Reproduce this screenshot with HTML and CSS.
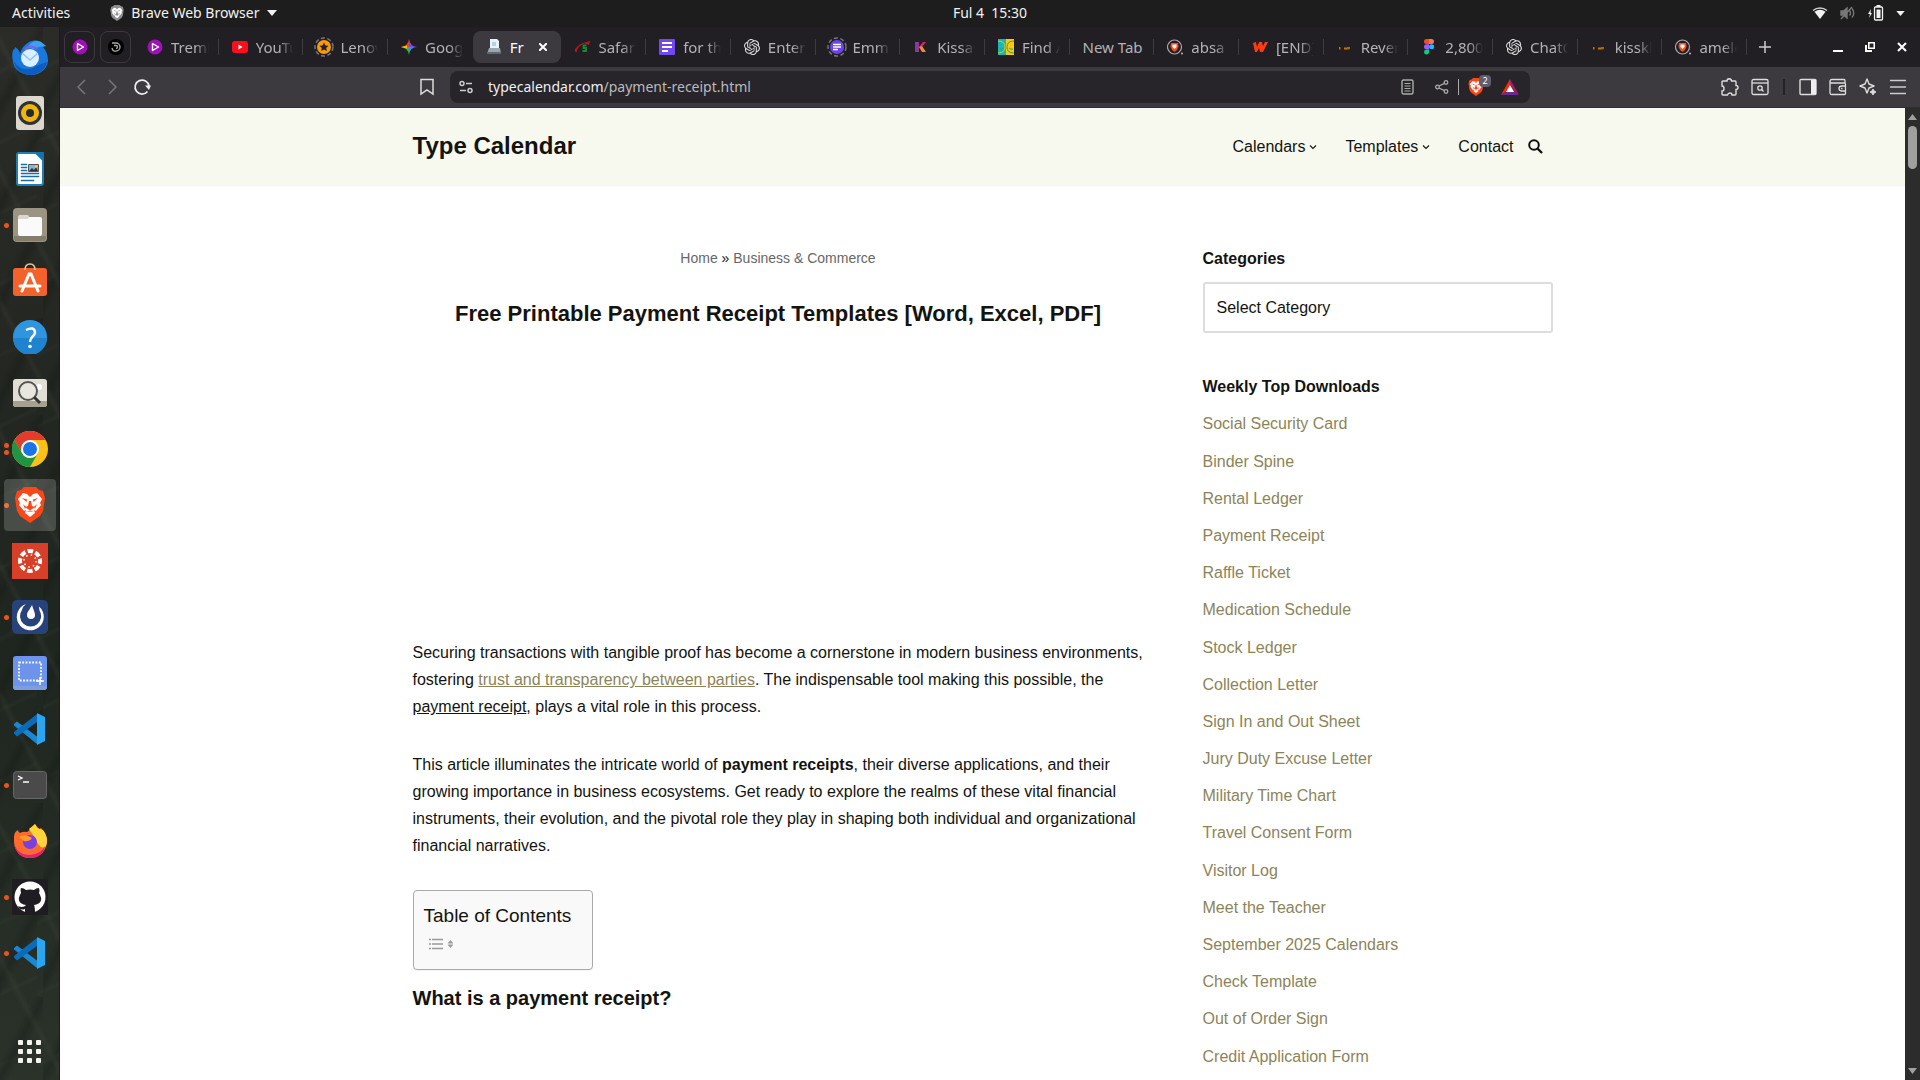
FILE: index.html
```html
<!DOCTYPE html>
<html lang="en">
<head>
<meta charset="utf-8">
<title>Free Printable Payment Receipt Templates [Word, Excel, PDF]</title>
<link rel="stylesheet" href="styles.css">
</head>
<body>
<svg class="sprite" aria-hidden="true">
  <symbol id="lion" viewBox="0 0 30 36">
    <path d="M9 0h12l3 3 4 1 2 7-2 13-3 5-10 7-10-7-3-5L0 11l2-7 4-1z"/>
    <path class="lion-face" d="M8 6l4 1h6l4-1 5 6-2 4 1 2-5 6-2-1 1 3-5 4-5-4 1-3-2 1-5-6 1-2-2-4z"/>
    <path d="M7 11l5 1.500-.5 2.500zM23 11l-5 1.500.5 2.500zM14 14h2l1 5 3 1-5 3.500L10 20l3-1zM8 17l3 3-1 2zM22 17l-3 3 1 2zM12 7l3 3 3-3zM11 25l4-1.500 4 1.500-4-.4z"/>
  </symbol>
  <symbol id="knot" viewBox="0 0 24 24">
    <path d="M22.28 9.82a5.98 5.98 0 0 0-.52-4.91 6.05 6.05 0 0 0-6.51-2.9A6.07 6.07 0 0 0 4.98 4.18a5.98 5.98 0 0 0-4 2.9 6.05 6.05 0 0 0 .75 7.1 5.98 5.98 0 0 0 .5 4.91 6.05 6.05 0 0 0 6.52 2.9A5.98 5.98 0 0 0 13.26 24a6.06 6.06 0 0 0 5.77-4.21 5.99 5.99 0 0 0 4-2.9 6.06 6.06 0 0 0-.75-7.07zm-9.02 12.61a4.48 4.48 0 0 1-2.88-1.04l.14-.08 4.78-2.76a.8.8 0 0 0 .39-.68v-6.74l2.02 1.17v5.58a4.5 4.5 0 0 1-4.45 4.55zM3.6 18.3a4.47 4.47 0 0 1-.53-3.01l.14.08 4.78 2.76a.77.77 0 0 0 .78 0l5.84-3.37v2.33l-4.87 2.82A4.5 4.5 0 0 1 3.6 18.3zM2.34 7.9a4.49 4.49 0 0 1 2.37-1.98V11.6a.77.77 0 0 0 .38.68l5.82 3.35-2.02 1.17-4.83-2.79A4.5 4.5 0 0 1 2.34 7.9zm16.6 3.85l-5.84-3.38 2.02-1.16 4.83 2.79a4.49 4.49 0 0 1-.68 8.1V12.4a.79.79 0 0 0-.33-.65zm2-3.02l-.14-.09-4.77-2.78a.78.78 0 0 0-.79 0L9.41 9.23V6.9l4.87-2.8a4.5 4.5 0 0 1 6.66 4.63zM8.3 12.86L6.28 11.7V6.07a4.5 4.5 0 0 1 7.38-3.45l-.14.08-4.78 2.76a.8.8 0 0 0-.39.68zm1.1-2.36l2.6-1.5 2.6 1.5v3L12 15l-2.6-1.5z"/>
  </symbol>
  <symbol id="play" viewBox="0 0 16 16">
    <circle cx="8" cy="8" r="7.5" fill="#9c12b4"/><path d="M5.500 4.500v7l6-3.500z" fill="none" stroke="#fff" stroke-width="1.400" stroke-linejoin="round"/>
  </symbol>
  <symbol id="code" viewBox="0 0 32 32">
    <path d="M0 11l3-2.500 20 15V31L0 12.500z" fill="#1b86d1"/>
    <path d="M0 20.500l3 3L23 9V1L0 19z" fill="#0a6cb8"/>
    <path d="M23 0l8 4v24l-8 4z" fill="#2aa5f2"/>
  </symbol>
  <symbol id="logs" viewBox="0 0 16 16">
    <path d="M2 8h1.500v2.500H2zM7 8.500h3v2H7z" fill="#c0740c"/><path d="M10 8h3v1.500l-1 1h-2z" fill="#a8660c"/>
  </symbol>
  <symbol id="search-lion" viewBox="0 0 16 16">
    <circle cx="7.500" cy="8" r="7" fill="none" stroke="#aaa" stroke-width="1.200"/><circle cx="15" cy="14.500" r="1" fill="#bbb"/><path d="M4 4h7l.5 3.500L10 11l-2.500 2L5 11 3.500 7.500z" fill="#fb4a1c"/><path d="M5.500 5.500h4v2.500l-2 2-2-2z" fill="#fff"/>
  </symbol>
  <symbol id="chevron" viewBox="0 0 8 8"><path d="M1 2.500l3 3 3-3" fill="none" stroke="currentColor" stroke-width="1.100"/></symbol>
  <symbol id="caret" viewBox="0 0 10 6"><path d="M0 0h10L5 6z" fill="#f2f2f2"/></symbol>
</svg>

<header class="topbar">
  <div class="topbar-left">
    <button class="topbar-btn">Activities</button>
    <button class="topbar-btn app-menu"><svg class="app-lion" width="14" height="16"><use href="#lion"/></svg>Brave Web Browser<svg width="10" height="6"><use href="#caret"/></svg></button>
  </div>
  <button class="topbar-btn clock">Ful 4&nbsp; 15:30</button>
  <div class="topbar-right">
    <svg width="16" height="14" viewBox="0 0 16 14"><path d="M1 4.500a11 11 0 0 1 14 0" fill="none" stroke="#ccc" stroke-width="1.500"/><path d="M2.500 5.800a9 9 0 0 1 11 0L8 13z" fill="#f2f2f2"/></svg>
    <svg width="16" height="14" viewBox="0 0 16 14" fill="none" stroke="#777" stroke-width="1.400"><path d="M1 5h2.500L7 2v10L3.500 9H1z" fill="#777"/><path d="M9.500 4.500q2 2.500 0 5M12 2.500q3.500 4.500 0 9M1 13L12 1"/></svg>
    <svg width="16" height="16" viewBox="0 0 16 16"><path d="M3 4L0 9h2l-1 4 3-5H2.500z" fill="#f2f2f2"/><rect x="6.500" y="2" width="8" height="13" rx="1" fill="none" stroke="#f2f2f2" stroke-width="1.300"/><path d="M8.500 0h4v2h-4zM8.500 4.500h4V13h-4z" fill="#f2f2f2"/></svg>
    <svg width="9" height="5"><use href="#caret"/></svg>
  </div>
</header>

<div class="desktop">
  <nav class="dock" aria-label="Dock">
    <button class="dock-item" aria-label="Thunderbird"><svg width="36" height="36" viewBox="0 0 36 36"><path d="M1 11c1 0 2-1 2-3 3 2 5 4 5 7 1-5 4-9 9-12 4-2 9-2 12 0l5 4-3 1c4 5 5 9 5 14-1 8-8 14-17 14S2 31 1 23c-1-5-1-8 0-12z" fill="#1878dd"/><path d="M16 8c3-6 9-7 13-5l5 4-7 1-6 2z" fill="#3aa0f5"/><path d="M13 11c3-5 9-4 12-1" stroke="#8a5ae6" stroke-width="2" fill="none"/><ellipse cx="18" cy="19" rx="9" ry="9" fill="#dcefff"/><path d="M10 14l8 7 8-7" fill="none" stroke="#8fc3f2" stroke-width="1.500"/><path d="M2 22c4 8 14 11 22 5l11-4c-2 8-9 13-17 13C9 36 3 30 2 22z" fill="#0d5cbe"/></svg></button>
    <button class="dock-item" aria-label="Rhythmbox"><svg width="28" height="34" viewBox="0 0 28 34"><rect width="28" height="34" rx="3" fill="#dcd8cd"/><circle cx="14" cy="17" r="12" fill="#2e3136"/><circle cx="14" cy="17" r="9" fill="#efb70d"/><circle cx="14" cy="17" r="4" fill="#26292c"/></svg></button>
    <button class="dock-item" aria-label="LibreOffice Writer"><svg width="28" height="34" viewBox="0 0 28 34"><path d="M3 1h17l7 7v23q0 2-2 2H3q-2 0-2-2V3q0-2 2-2z" fill="#fff" stroke="#1d7fb4" stroke-width="2"/><path d="M19 0h9v9z" fill="#1571a6"/><path d="M5 12h6v1H5zM5 15h6v1H5zM5 18h6v1H5zM5 21h18v1H5zM5 24h18v1H5zM5 28h13v1H5z" fill="#1a6fa3" stroke="#1a6fa3" stroke-width=".5"/><path d="M12.500 12.500h10v7h-10z" fill="#7db9dc" stroke="#555"/><path d="M13 19l3-3 2 2 2-3 2 4z" fill="#333"/><circle cx="20" cy="14.500" r="1.200" fill="#fc3"/></svg></button>
    <button class="dock-item running" aria-label="Files"><svg width="34" height="34" viewBox="0 0 34 34"><rect width="34" height="34" rx="4" fill="#9b9482"/><path d="M1 28h32v2q0 3-3 3H4q-3 0-3-3z" fill="#857e6d"/><rect x="5" y="9" width="24" height="19" rx="2" fill="#fafafa"/><path d="M5 9q0-2 2-2h7q2 0 2 2l-1 2H5z" fill="#dcd8cd"/></svg></button>
    <button class="dock-item" aria-label="Ubuntu Software"><svg width="34" height="36" viewBox="0 0 34 36"><rect y="5" width="34" height="28" rx="3" fill="#f2622a"/><path d="M12 7q0-6 5-6t5 6" fill="none" stroke="#e3c79a" stroke-width="1.500"/><path d="M9 28l7-17h2l7 17M7 23h20" fill="none" stroke="#fff" stroke-width="3" stroke-linecap="round"/></svg></button>
    <button class="dock-item" aria-label="Help"><svg width="34" height="34" viewBox="0 0 34 34"><circle cx="17" cy="17" r="17" fill="#2e95de"/><path d="M0 18a17 17 0 0 0 34 0z" fill="#1f83d0"/><path d="M13 10q8-4 9 2c0 5-5 4-5 10" fill="none" stroke="#fff" stroke-width="2.500"/><circle cx="17" cy="26.500" r="1.800" fill="#fff"/></svg></button>
    <button class="dock-item" aria-label="Image Viewer"><svg width="34" height="28" viewBox="0 0 34 28"><rect width="34" height="28" rx="3" fill="#e0ded5"/><path d="M0 22h34v3q0 3-3 3H3q-3 0-3-3z" fill="#a5a18f"/><circle cx="26" cy="8" r="3" fill="#fff"/><circle cx="15" cy="12" r="9" fill="#e9e8e2" fill-opacity=".8" stroke="#555" stroke-width="2"/><path d="M21 18l6 6" stroke="#333" stroke-width="3"/></svg></button>
    <button class="dock-item running twice" aria-label="Google Chrome"><svg width="36" height="36" viewBox="0 0 36 36"><circle cx="18" cy="18" r="18" fill="#fbc116"/><path d="M2.400 9A18 18 0 0 1 33.600 9H18a9 9 0 0 0-8 13z" fill="#e33b2e"/><path d="M2.400 9L10.200 22.500A9 9 0 0 0 25.800 22.500L18 36A18 18 0 0 1 2.400 9z" fill="#229342"/><circle cx="18" cy="18" r="9" fill="#fff"/><circle cx="18" cy="18" r="7" fill="#1a73e8"/></svg></button>
    <button class="dock-item running current" aria-label="Brave"><svg class="lion-orange" width="30" height="36"><use href="#lion"/></svg></button>
    <button class="dock-item" aria-label="Canvas"><svg width="36" height="36" viewBox="0 0 36 36"><path d="M0 0h36v36H0z" fill="#d73f28"/><circle cx="18" cy="18" r="10" fill="none" stroke="#fff" stroke-width="4" stroke-dasharray="5.500 2.354" stroke-dashoffset="2.700"/><circle cx="18" cy="18" r="6" fill="none" stroke="#fff" stroke-width="1.500" stroke-dasharray="1.500 3.212"/></svg></button>
    <button class="dock-item running" aria-label="Mattermost"><svg width="36" height="34" viewBox="0 0 36 34"><rect width="36" height="34" rx="5" fill="#28427b"/><path d="M14 4a13.500 13.500 0 1 0 13 2.500l.5 4A10.500 10.500 0 1 1 10 10q1-4 4-6z" fill="#fff"/><path d="M20 5c-2 4-5 7-5 10q0 4 4 4t4-4c0-3-2-6-3-10z" fill="#fff"/></svg></button>
    <button class="dock-item" aria-label="Screenshot"><svg width="34" height="34" viewBox="0 0 34 34"><rect width="34" height="34" rx="3" fill="#6d93ea"/><path d="M0 30h34q0 4-3 4H3q-3 0-3-4z" fill="#7c9fdf"/><path d="M6 6.500h22v18H6z" fill="none" stroke="#fff" stroke-width="1.800" stroke-dasharray="1.800 1.500"/><path d="M23 25h8M27 21v8" stroke="#fff" stroke-width="1.500"/></svg></button>
    <button class="dock-item" aria-label="Visual Studio Code"><svg width="32" height="32"><use href="#code"/></svg></button>
    <button class="dock-item running" aria-label="Terminal"><svg width="34" height="28" viewBox="0 0 34 28"><rect x=".5" y=".5" width="33" height="27" rx="3" fill="#4a4a4a" stroke="#666"/><path d="M5 5l4 2-4 2M10 11h6" fill="none" stroke="#fff" stroke-width="1.300"/></svg></button>
    <button class="dock-item" aria-label="Firefox"><svg width="34" height="34" viewBox="0 0 34 34"><path d="M1 13Q1 8 5 6q0 2 2 3 3-2 7-1l4-3 4-5q2 4 4 5l2-1q6 6 6 13c0 9-7 17-17 17S0 27 1 13z" fill="#ff6a2f"/><path d="M22 0q3 5 5 5l3 1q6 8 3 16-4 4-8-2-4-8-9-15z" fill="#ffd43b"/><path d="M1 20q5 12 16 11t15-9q-2 12-15 12T1 20z" fill="#e8207c"/><circle cx="17" cy="18" r="7" fill="#7a3fe0"/><path d="M6 13q6-4 13 1-3 4-8 3z" fill="#ff9a22"/></svg></button>
    <button class="dock-item running" aria-label="GitHub"><svg width="36" height="36" viewBox="0 0 36 36"><path d="M0 0h36v36H0z" fill="#201d22"/><circle cx="18" cy="18" r="15.500" fill="#fff"/><path d="M9 9q3 0 5 2 4-1 8 0 2-2 5-2 1 3 0 5 6 10-5 12 1 2 1 8H13v-4q-5 2-7-3 4 2 7 0l1-1Q3 24 9 14q-1-3 0-5z" fill="#201d22"/></svg></button>
    <button class="dock-item running" aria-label="Visual Studio Code"><svg width="32" height="32"><use href="#code"/></svg></button>
    <button class="dock-item apps" aria-label="Show Applications"><svg width="24" height="24" viewBox="0 0 24 24" fill="#f4f4ee"><rect width="5" height="5" rx="1"/><rect x="9" width="5" height="5" rx="1"/><rect x="18" width="5" height="5" rx="1"/><rect y="9" width="5" height="5" rx="1"/><rect x="9" y="9" width="5" height="5" rx="1"/><rect x="18" y="9" width="5" height="5" rx="1"/><rect y="18" width="5" height="5" rx="1"/><rect x="9" y="18" width="5" height="5" rx="1"/><rect x="18" y="18" width="5" height="5" rx="1"/></svg></button>
  </nav>

  <div class="browser">
    <div class="tabstrip">
      <button class="pinned" aria-label="Pinned tab"><svg width="16" height="16"><use href="#play"/></svg></button>
      <button class="pinned" aria-label="Pinned tab"><svg width="16" height="16" viewBox="0 0 16 16"><circle cx="8" cy="8" r="8" fill="#000"/><path d="M4 4h4a4 4 0 0 1 0 8M6 6.500h2a1.500 1.500 0 0 1 0 3M4 9q1 4 4 3" fill="none" stroke="#aaa" stroke-width="1.300"/></svg></button>
      <div class="tabs">
        <button class="tab"><svg width="16" height="16"><use href="#play"/></svg><span class="tab-title">Tremb</span></button>
        <button class="tab"><svg width="16" height="16" viewBox="0 0 16 16"><rect y="2" width="16" height="12" rx="3" fill="#fb0f1f"/><path d="M6.500 5.500v5l4-2.500z" fill="#fff"/></svg><span class="tab-title">YouTu</span></button>
        <button class="tab"><svg class="wide" width="20" height="20" viewBox="0 0 20 20"><circle cx="10" cy="10" r="9" fill="none" stroke="#777" stroke-width="1.500" stroke-dasharray="4 2.500"/><circle cx="10" cy="10" r="7" fill="#f79a0c"/><path d="M10 5.500l1.400 3 3.100.3-2.300 2.100.7 3.100-2.900-1.600L7.100 14l.7-3.100-2.300-2.100 3.100-.3z" fill="#222"/></svg><span class="tab-title">Lenov</span></button>
        <button class="tab"><svg width="16" height="16" viewBox="0 0 16 16"><path d="M8 0q1 7 8 8H8z" fill="#6b4fe8"/><path d="M8 0Q7 7 0 8h8z" fill="#e0433a"/><path d="M0 8q7 1 8 8V8z" fill="#38b25a"/><path d="M16 8q-7 0-8 8V8z" fill="#3f86f5"/><path d="M0 8l6-1.500v3z" fill="#f4c20d"/></svg><span class="tab-title">Goog</span></button>
        <button class="tab active"><svg width="16" height="16" viewBox="0 0 16 16"><path d="M4 0h7l2 2v8H4z" fill="#e9f2f8"/><path d="M6 4h4M6 6h4" stroke="#79b6d4"/><path d="M3 9h11l1 6H1z" fill="#9aa7b2"/><path d="M1 13h14v2H1z" fill="#5d6873"/></svg><span class="tab-title">Fr</span><svg class="tab-close" width="8" height="8" viewBox="0 0 8 8"><path d="M0 0l8 8M8 0L0 8" stroke="#fff" stroke-width="2"/></svg></button>
        <button class="tab"><svg width="16" height="16" viewBox="0 0 16 16"><path d="M15 3Q7 3 2 9q-3 4 1 4-1-3 3-6 4-3 9-4z" fill="#c4141c"/><path d="M10 4l6-2-1 4z" fill="#c4141c"/><path d="M12.500 6.500H9.500v2.500h2.500v3H8.500" fill="none" stroke="#138a35" stroke-width="1.800"/></svg><span class="tab-title">Safari</span></button>
        <button class="tab"><svg width="16" height="16" viewBox="0 0 16 16"><rect width="16" height="16" rx="1" fill="#7248f5"/><path d="M3 4h10M3 8h10M3 12h6" stroke="#fff" stroke-width="2"/></svg><span class="tab-title">for th</span></button>
        <button class="tab"><svg width="16" height="16" fill="#ddd"><use href="#knot"/></svg><span class="tab-title">Enter</span></button>
        <button class="tab"><svg class="wide" width="20" height="20" viewBox="0 0 20 20"><circle cx="10" cy="10" r="9" fill="none" stroke="#777" stroke-width="1.500" stroke-dasharray="4 2.500"/><circle cx="10" cy="10" r="7" fill="#6a45ec"/><path d="M6 7.500h8M6 10h8M6 12.500h5" stroke="#fff" stroke-width="1.500"/></svg><span class="tab-title">Emma</span></button>
        <button class="tab"><svg width="16" height="16" viewBox="0 0 16 16"><path d="M2 3h4v10H2z" fill="#8a37a0"/><path d="M6 8l4-5h3L8 9z" fill="#e51f62"/><path d="M6 8l3-1 4 6H9z" fill="#e9902d"/></svg><span class="tab-title">Kissas</span></button>
        <button class="tab"><svg width="16" height="16" viewBox="0 0 16 16"><path d="M0 0h8v16H0z" fill="#14b8b8"/><path d="M8 0h8v16H8z" fill="#f7cb0d"/><path d="M0 2q7 0 7 6t-7 6" fill="none" stroke="#d5c629"/><path d="M16 2q-7 0-7 6t7 6M2 10q2 1 3-1M11 9q2 2 4 1" fill="none" stroke="#2c9d80"/></svg><span class="tab-title">Find A</span></button>
        <button class="tab"><span class="tab-title">New Tab</span></button>
        <button class="tab"><svg width="16" height="16"><use href="#search-lion"/></svg><span class="tab-title">absa l</span></button>
        <button class="tab"><svg width="16" height="16" viewBox="0 0 16 16"><path d="M1 4l3-1 1 5 2-5h3l1 4 2-4h3l-5 10H8L7 9l-2 4H3z" fill="#ff3a12"/></svg><span class="tab-title">[END]</span></button>
        <button class="tab"><svg width="16" height="16"><use href="#logs"/></svg><span class="tab-title">Rever</span></button>
        <button class="tab"><svg width="16" height="16" viewBox="0 0 16 16"><path d="M8 0v5H5.500a2.500 2.500 0 0 1 0-5z" fill="#f24e1e"/><path d="M8 0h2.500a2.500 2.500 0 0 1 0 5H8z" fill="#ff7262"/><path d="M8 5.300v5H5.500a2.500 2.500 0 0 1 0-5z" fill="#a259ff"/><circle cx="10.600" cy="7.800" r="2.500" fill="#1abcfe"/><path d="M8 10.600v3a2.500 2.500 0 1 1-2.500-3z" fill="#0acf83"/></svg><span class="tab-title">2,800</span></button>
        <button class="tab"><svg width="16" height="16" fill="#ddd"><use href="#knot"/></svg><span class="tab-title">ChatG</span></button>
        <button class="tab"><svg width="16" height="16"><use href="#logs"/></svg><span class="tab-title">kisskl</span></button>
        <button class="tab"><svg width="16" height="16"><use href="#search-lion"/></svg><span class="tab-title">amelo</span></button>
      </div>
      <div class="window-controls">
        <button class="icon-btn" aria-label="New tab"><svg width="12" height="12" viewBox="0 0 12 12"><path d="M6 0v12M0 6h12" stroke="#ccc" stroke-width="1.500"/></svg></button>
        <span class="spacer"></span>
        <button class="icon-btn" aria-label="Minimize"><svg width="10" height="10" viewBox="0 0 10 10"><path d="M0 9h10" stroke="#fff" stroke-width="2"/></svg></button>
        <button class="icon-btn" aria-label="Restore"><svg width="10" height="10" viewBox="0 0 10 10" fill="none" stroke="#fff"><path d="M3.800.8h5.500v5.500H3.800z" stroke-width="1.600"/><path d="M1 3v6h6" stroke-width="2"/></svg></button>
        <button class="icon-btn" aria-label="Close"><svg width="10" height="10" viewBox="0 0 10 10"><path d="M1 1l8 8M9 1L1 9" stroke="#fff" stroke-width="2"/></svg></button>
      </div>
    </div>

    <div class="toolbar">
      <div class="toolbar-left">
        <button class="icon-btn" aria-label="Back"><svg width="16" height="16" viewBox="0 0 16 16"><path d="M11 1L4 8l7 7" fill="none" stroke="#77747c" stroke-width="1.500"/></svg></button>
        <button class="icon-btn" aria-label="Forward"><svg width="16" height="16" viewBox="0 0 16 16"><path d="M5 1l7 7-7 7" fill="none" stroke="#77747c" stroke-width="1.500"/></svg></button>
        <button class="icon-btn" aria-label="Reload"><svg width="18" height="18" viewBox="0 0 18 18"><path d="M14.500 13.500A7 7 0 1 1 16 8" fill="none" stroke="#eee" stroke-width="1.700"/><path d="M12 7.500h6L16 12z" fill="#eee"/></svg></button>
        <span class="spacer"></span>
        <button class="icon-btn" aria-label="Bookmark"><svg width="14" height="18" viewBox="0 0 14 18"><path d="M1 1.500h12V16l-6-4-6 4z" fill="none" stroke="#ddd" stroke-width="1.500"/></svg></button>
      </div>
      <div class="urlbar">
        <svg width="14" height="14" viewBox="0 0 14 14" fill="none" stroke="#ccc" stroke-width="1.500"><circle cx="3" cy="3.500" r="2"/><path d="M7 3.500h6M1 10.500h6"/><circle cx="11" cy="10.500" r="2"/></svg>
        <a class="url" href="#">typecalendar.com<span class="url-path">/payment-receipt.html</span></a>
        <button class="url-btn" aria-label="Reader mode"><svg width="14" height="16" viewBox="0 0 14 16" fill="none" stroke="#aaa"><rect x="1" y="1" width="11" height="14" rx="1.500" stroke-width="1.400"/><path d="M3.500 4.500h6M3.500 7h6M3.500 9.500h6M3.500 12h6"/></svg></button>
        <button class="url-btn share" aria-label="Share"><svg width="14" height="14" viewBox="0 0 14 14" fill="none" stroke="#aaa" stroke-width="1.300"><circle cx="2.500" cy="7" r="1.800"/><circle cx="11" cy="2.500" r="1.800"/><circle cx="11" cy="11.500" r="1.800"/><path d="M4 6l5.500-2.700M4 8l5.500 2.700"/></svg></button>
        <button class="url-btn" aria-label="Shields"><svg class="lion-orange" width="16" height="18"><use href="#lion"/></svg><span class="badge">2</span></button>
        <button class="url-btn" aria-label="Rewards"><svg width="18" height="16" viewBox="0 0 18 16"><path d="M9 0L0 16l9-6z" fill="#ff2a00"/><path d="M9 0l9 16-9-6z" fill="#9e1f63"/><path d="M0 16h18l-9-6z" fill="#662d91"/><path d="M9 6l4 7H5z" fill="#fff"/></svg></button>
      </div>
      <div class="toolbar-right">
        <button class="icon-btn" aria-label="Extensions"><svg width="18" height="18" viewBox="0 0 18 18"><path d="M2 3h4q0-2 2-2.200Q10.500 1 10.500 3H14q1 0 1 1v3.500q2 0 2 2t-2 2V16q0 1-1 1h-3q0-2-2-2t-2.500 2H2q-1 0-1-1v-3q2 0 2-2.500T1 8V4q0-1 1-1z" fill="none" stroke="#ddd" stroke-width="1.400"/></svg></button>
        <button class="icon-btn" aria-label="Search page"><svg width="18" height="18" viewBox="0 0 18 18" fill="none" stroke="#ddd" stroke-width="1.300"><rect x="1" y="1.500" width="16" height="15" rx="1.500"/><path d="M1 5h16"/><circle cx="9" cy="10" r="2.200"/><path d="M10.500 11.500l2 2"/></svg></button>
        <span class="divider"></span>
        <button class="icon-btn" aria-label="Sidebar"><svg width="18" height="18" viewBox="0 0 18 18"><rect x="1" y="1.500" width="16" height="15" rx="1" fill="none" stroke="#ddd" stroke-width="1.400"/><path d="M12 2h5v14h-5z" fill="#eee"/></svg></button>
        <button class="icon-btn" aria-label="Wallet"><svg width="18" height="18" viewBox="0 0 18 18" fill="none" stroke="#ddd" stroke-width="1.300"><path d="M16 5V2.500Q16 1.500 15 1.500H3q-2 0-2 2V15q0 1.500 1.500 1.500h13q1 0 1-1V6q0-1-1-1H3Q1 5 1 3.500M17 8h-4q-3 0-3 2.500T13 13h4"/><path d="M12 10.500h1.500"/></svg></button>
        <button class="icon-btn" aria-label="Leo AI"><svg width="18" height="18" viewBox="0 0 18 18"><path d="M8 1l2 5 5 2-5 2-2 5-2-5-5-2 5-2z" fill="none" stroke="#ddd" stroke-width="1.400" stroke-linejoin="round"/><path d="M14 11l1 2 2 1-2 1-1 2-1-2-2-1 2-1z" fill="#ddd" stroke="#ddd"/></svg></button>
        <button class="icon-btn" aria-label="Menu"><svg width="18" height="16" viewBox="0 0 18 16"><path d="M1 1.500h16M1 8h16M1 14.500h16" stroke="#ccc" stroke-width="1.500"/></svg></button>
      </div>
    </div>

    <div class="viewport">
      <div class="page">
        <header class="site-header">
          <div class="container site-bar">
            <a class="site-title" href="#">Type Calendar</a>
            <nav class="site-nav" aria-label="Primary">
              <a href="#">Calendars<svg width="8" height="8"><use href="#chevron"/></svg></a>
              <a href="#">Templates<svg width="8" height="8"><use href="#chevron"/></svg></a>
              <a href="#">Contact</a>
              <button class="search-btn" aria-label="Search"><svg width="15" height="15" viewBox="0 0 15 15" fill="none" stroke="#111" stroke-width="2"><circle cx="6" cy="6" r="4.800"/><path d="M9.500 9.500l4.500 4.500" stroke-width="2.400"/></svg></button>
            </nav>
          </div>
        </header>
        <div class="container columns">
          <main class="article">
            <nav class="breadcrumb" aria-label="Breadcrumb"><a href="#">Home</a> » <a href="#">Business &amp; Commerce</a></nav>
            <h1>Free Printable Payment Receipt Templates [Word, Excel, PDF]</h1>
            <div class="ad-slot"></div>
            <p>Securing transactions with tangible proof has become a cornerstone in modern business environments, fostering <a class="olive" href="#">trust and transparency between parties</a>. The indispensable tool making this possible, the <u>payment receipt</u>, plays a vital role in this process.</p>
            <p>This article illuminates the intricate world of <strong>payment receipts</strong>, their diverse applications, and their growing importance in business ecosystems. Get ready to explore the realms of these vital financial instruments, their evolution, and the pivotal role they play in shaping both individual and organizational financial narratives.</p>
            <div class="toc">
              <div class="toc-title">Table of Contents</div>
              <button class="toc-toggle" aria-label="Toggle table of contents"><svg width="24" height="12" viewBox="0 0 24 12"><path d="M0 1.500h2M3 1.500h11M0 6h2M3 6h11M0 10.500h2M3 10.500h11" stroke="#999" stroke-width="1.500"/><path d="M18.500 5.500L21.500 2l3 3.500zM18.500 6.500l3 3.500 3-3.500z" fill="#999"/></svg></button>
            </div>
            <h2>What is a payment receipt?</h2>
          </main>
          <aside class="sidebar">
            <label class="widget-title" for="category">Categories</label>
            <select id="category" class="category"><option>Select Category</option></select>
            <h3 class="widget-title">Weekly Top Downloads</h3>
            <ul class="downloads">
              <li><a href="#">Social Security Card</a></li>
              <li><a href="#">Binder Spine</a></li>
              <li><a href="#">Rental Ledger</a></li>
              <li><a href="#">Payment Receipt</a></li>
              <li><a href="#">Raffle Ticket</a></li>
              <li><a href="#">Medication Schedule</a></li>
              <li><a href="#">Stock Ledger</a></li>
              <li><a href="#">Collection Letter</a></li>
              <li><a href="#">Sign In and Out Sheet</a></li>
              <li><a href="#">Jury Duty Excuse Letter</a></li>
              <li><a href="#">Military Time Chart</a></li>
              <li><a href="#">Travel Consent Form</a></li>
              <li><a href="#">Visitor Log</a></li>
              <li><a href="#">Meet the Teacher</a></li>
              <li><a href="#">September 2025 Calendars</a></li>
              <li><a href="#">Check Template</a></li>
              <li><a href="#">Out of Order Sign</a></li>
              <li><a href="#">Credit Application Form</a></li>
            </ul>
          </aside>
        </div>
      </div>
      <div class="scrollbar">
        <svg width="9" height="6" viewBox="0 0 9 6"><path d="M0 6l4.500-6L9 6z" fill="#a0a0a0"/></svg>
        <span class="thumb"></span>
        <span class="spacer"></span>
        <svg width="9" height="6" viewBox="0 0 9 6"><path d="M0 0h9L4.500 6z" fill="#a0a0a0"/></svg>
      </div>
    </div>
  </div>
</div>
</body>
</html>
```

FILE: styles.css
```css
* { box-sizing: border-box; }

body {
  margin: 0;
  height: 100vh;
  display: flex;
  flex-direction: column;
  overflow: hidden;
  background: #1d1d1d;
  font-family: "Noto Sans", "Open Sans", sans-serif;
  font-size: 14px;
}

button {
  margin: 0;
  padding: 0;
  border: 0;
  background: none;
  color: inherit;
  font: inherit;
}

svg { display: block; flex: none; }
.sprite { display: none; }
.spacer { flex: 1; }

/* System bar */
.topbar {
  flex: none;
  height: 27px;
  display: grid;
  grid-template-columns: 1fr auto 1fr;
  align-items: center;
  padding: 0 0 1px 12px;
  color: #f2f2f2;
}
.topbar-left, .topbar-right { display: flex; align-items: center; }
.topbar-left { gap: 40px; }
.topbar-right { justify-content: flex-end; gap: 12px; padding-right: 15px; }
.topbar-btn { white-space: nowrap; line-height: 24px; }
.app-menu { display: flex; align-items: center; gap: 7px; }
.clock { margin-left: 48px; }
.app-lion { fill: #8e8e8e; }
.lion-orange { fill: #fb4718; }
.lion-face { fill: #fff; }

.desktop { flex: 1; display: flex; min-height: 0; }

/* Dock */
.dock {
  width: 60px;
  flex: none;
  display: flex;
  flex-direction: column;
  padding-top: 2px;
  border-right: 1px solid #1b1d1a;
  background:
    linear-gradient(62deg, transparent 44%, #4a4e4433 48%, transparent 52%) 0 0 / 60px 131px,
    linear-gradient(118deg, transparent 36%, #10131044 46%, transparent 56%) 0 0 / 43px 97px,
    linear-gradient(155deg, transparent 46%, #48504222 50%, transparent 54%) 0 0 / 37px 71px,
    linear-gradient(#2b2c28, #242722 30%, #1f261f 60%, #2a322a);
}
.dock-item {
  position: relative;
  height: 56px;
  flex: none;
  display: grid;
  place-items: center;
}
.dock-item.apps { margin-top: auto; }
.dock-item.running::before {
  content: "";
  position: absolute;
  left: 4px;
  top: 26px;
  width: 5px;
  height: 5px;
  border-radius: 50%;
  background: #e95420;
}
.dock-item.twice::before { top: 22px; box-shadow: 0 7px #e95420; }
.dock-item.current::after {
  content: "";
  position: absolute;
  inset: 2px 3px 2px 4px;
  border-radius: 4px;
  background: #ffffff2e;
}
.dock-item svg { position: relative; z-index: 1; }

/* Browser frame */
.browser { flex: 1; min-width: 0; display: flex; flex-direction: column; }
.tabstrip {
  flex: none;
  height: 40px;
  display: flex;
  align-items: center;
  padding-left: 4px;
  background: #211f24;
  color: #b4b2b7;
  font-size: 15px;
}
.pinned {
  width: 31px;
  height: 32px;
  margin-right: 5px;
  display: grid;
  place-items: center;
  border: 1px solid #3b393e;
  border-radius: 8px;
}
.tabs { flex: 1; min-width: 0; display: flex; margin-left: -2px; }
.tab {
  flex: 1 1 0;
  min-width: 0;
  height: 32px;
  display: flex;
  align-items: center;
  gap: 8px;
  padding: 0 10px 0 13px;
  line-height: 20px;
  background: linear-gradient(#3d3b41, #3d3b41) right center / 1px 16px no-repeat;
}
.tab .wide { margin: 0 -2px; }
.tab:has(+ .active) { background: none; }
.tab.active { padding-right: 14px; background: #3c393f; border-radius: 8px; color: #fff; }
.tab-title {
  flex: 1;
  min-width: 0;
  overflow: hidden;
  white-space: nowrap;
  text-align: left;
  mask-image: linear-gradient(to left, transparent, #000 14px);
}
.tab.active .tab-title,
.tab > .tab-title:first-child { mask-image: none; }
.window-controls { width: 173px; flex: none; display: flex; align-items: center; padding: 0 2px; }
.icon-btn { width: 32px; height: 32px; flex: none; display: grid; place-items: center; }

.toolbar {
  flex: none;
  height: 41px;
  display: grid;
  grid-template-columns: 390px 1fr 390px;
  align-items: center;
  padding-bottom: 1px;
  background: #3c393f;
  border-bottom: 1px solid #302e33;
}
.toolbar-left, .toolbar-right { display: flex; align-items: center; }
.toolbar-left { padding: 0 8px 0 7px; }
.toolbar-right { justify-content: flex-end; padding-right: 7px; }
.toolbar-left .icon-btn, .toolbar-right .icon-btn { width: 30px; }
.divider { width: 2px; height: 16px; margin: 0 8px; background: #232126; }

.urlbar {
  height: 32px;
  display: flex;
  align-items: center;
  padding: 0 3px 0 9px;
  border-radius: 8px;
  background: #27252a;
}
.url { flex: 1; margin-left: 15px; color: #f0eff1; text-decoration: none; }
.url-path { color: #bbb9be; }
.url-btn { position: relative; width: 34px; height: 32px; display: grid; place-items: center; }
.share { background: linear-gradient(#aaa, #aaa) right center / 1px 16px no-repeat; }
.badge {
  position: absolute;
  left: 20px;
  top: 4px;
  width: 12px;
  height: 12px;
  border-radius: 4px;
  background: #5f5d70;
  color: #fff;
  font-size: 9px;
  line-height: 12px;
  text-align: center;
}

/* Page area */
.viewport { flex: 1; min-height: 0; display: flex; }
.page {
  flex: 1;
  min-width: 0;
  overflow: hidden;
  background: #fff;
  color: #131310;
  font: 16px/1.7 "Liberation Sans", Arial, sans-serif;
}
.container { max-width: 1170px; margin: 0 auto; padding: 0 15px; }
.site-header { background: #f8f9ee; box-shadow: 0 1px 2px #0000000d; }
.site-bar { height: 77px; display: flex; align-items: center; justify-content: space-between; }
.site-title { color: inherit; font-size: 24px; font-weight: 700; text-decoration: none; }
.site-nav { display: flex; align-items: center; gap: 28px; padding-right: 10px; }
.site-nav a { display: flex; align-items: center; gap: 4px; color: inherit; text-decoration: none; }
.search-btn { margin-left: -14px; }

.columns {
  display: grid;
  grid-template-columns: minmax(0, 1fr) 350px;
  gap: 59px;
  padding-top: 60px;
}
.breadcrumb { text-align: center; font-size: 14px; line-height: 27px; }
.breadcrumb a { color: #676767; text-decoration: none; }
h1 { margin: 24px 0 0; font-size: 22px; line-height: 36px; text-align: center; }
.ad-slot { height: 280px; margin: 27px 0 0; }
p { margin: 0 0 30px; }
p + .toc { margin-top: 31px; }
.olive { color: #8c8459; }
.toc {
  width: fit-content;
  height: 80px;
  padding: 9px 21px 0 10px;
  border: 1px solid #aaa;
  border-radius: 4px;
  background: #f9f9f9;
  box-shadow: 0 1px 1px #0000000d;
}
.toc-title { font-size: 19px; line-height: 32px; }
.toc-toggle { display: block; margin: 6px 0 0 5px; }
h2 { margin: 10px 0 0; font-size: 20px; line-height: 36px; }

.widget-title { display: block; margin: 0 0 10px; font-size: 16px; font-weight: 700; }
.category {
  appearance: none;
  display: block;
  width: 100%;
  height: 51px;
  margin-bottom: 40px;
  padding: 0 12px;
  border: 2px solid #ddd;
  border-radius: 3px;
  background: #fff;
  color: inherit;
  font: inherit;
}
.downloads { margin: 0; padding: 0; list-style: none; display: grid; gap: 10px; }
.downloads a { color: #8c8459; text-decoration: none; }

.scrollbar {
  width: 15px;
  flex: none;
  display: flex;
  flex-direction: column;
  align-items: center;
  padding: 6px 0;
  background: #2c2c2c;
}
.thumb { width: 9px; height: 43px; margin-top: 6px; border-radius: 5px; background: #9f9f9f; }
```
